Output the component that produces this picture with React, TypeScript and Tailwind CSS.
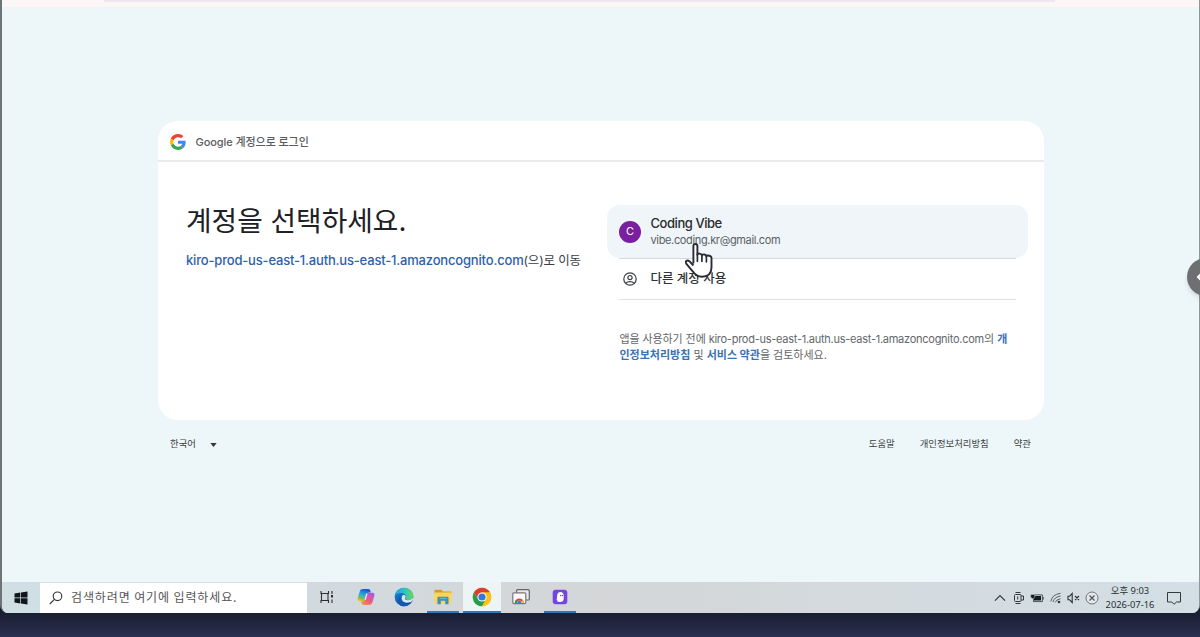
const footerLinks = ["도움말", "개인정보처리방침", "약관"];

function GoogleLogo() {
  return (
    <svg viewBox="0 0 48 48" className="h-4 w-4">
      <path fill="#EA4335" d="M24 9.5c3.54 0 6.71 1.22 9.21 3.6l6.85-6.85C35.9 2.38 30.47 0 24 0 14.62 0 6.51 5.38 2.56 13.22l7.98 6.19C12.43 13.72 17.74 9.5 24 9.5z" />
      <path fill="#4285F4" d="M46.98 24.55c0-1.57-.15-3.09-.38-4.55H24v9.02h12.94c-.58 2.96-2.26 5.48-4.78 7.18l7.73 6c4.51-4.18 7.09-10.36 7.09-17.65z" />
      <path fill="#FBBC05" d="M10.53 28.59c-.48-1.45-.76-2.99-.76-4.59s.27-3.14.76-4.59l-7.98-6.19C.92 16.46 0 20.12 0 24c0 3.88.92 7.54 2.56 10.78l7.97-6.19z" />
      <path fill="#34A853" d="M24 48c6.48 0 11.93-2.13 15.89-5.81l-7.73-6c-2.15 1.45-4.92 2.3-8.16 2.3-6.26 0-11.57-4.22-13.47-9.91l-7.98 6.19C6.51 42.62 14.62 48 24 48z" />
    </svg>
  );
}

function AccountIcon() {
  return (
    <svg viewBox="0 0 14 14" fill="none" stroke="#3c4043" strokeWidth="1.2" className="h-3.5 w-3.5">
      <circle cx="7" cy="7" r="6.2" />
      <circle cx="7" cy="5.6" r="2.1" />
      <path d="M2.8 11.2C5 9.1 9 9.1 11.2 11.2" />
    </svg>
  );
}

function HandCursor() {
  return (
    <svg viewBox="0 0 28 38" className="absolute top-[242px] left-[685px] h-[39px] w-7">
      <path
        d="M8.4 21V3.6c0-2.8 4-2.8 4 0v8.7c.5-1.8 4-1.6 4.5.5.6-1.5 4.1-1.1 4.5.9.9-1.2 5.1-.8 5.1 2.1v9.5c-.2 5.5-3 9-9.6 9-4.6 0-6.9-2-9-5.2L1.4 21.4c-1.7-2.9 1-4.3 3-2.7L8.4 23"
        fill="#fff"
        stroke="#2b2b36"
        strokeWidth="1.9"
        strokeLinejoin="round"
      />
      <path d="M12.4 11.5v7.2M16.9 12.8v6M21.4 13.7v5.6" stroke="#2b2b36" strokeWidth="1.7" strokeLinecap="round" />
    </svg>
  );
}

function SearchIcon() {
  return (
    <svg viewBox="0 0 14 14" fill="none" stroke="#333" strokeWidth="1.1" className="h-3.5 w-3.5">
      <circle cx="8.5" cy="5.3" r="4.3" />
      <path d="M5.4 8.4.8 13" />
    </svg>
  );
}

function TaskViewIcon() {
  return (
    <svg viewBox="0 0 14 14" fill="none" stroke="#2b3035" strokeWidth="1.1" className="h-3.5 w-3.5">
      <path d="M1 1v2.5h7.5V1M1 13v-2.5h7.5V13M1.5 3.5v7M8 3.5v7M12 1v3M12 9.5V13" />
      <path d="M11 5h2v2.6h-2z" fill="#2b3035" stroke="none" />
    </svg>
  );
}

function CopilotIcon() {
  return (
    <svg viewBox="0 0 18 18" className="h-[18px] w-[18px]">
      <defs>
        <linearGradient id="copilotCool" x1="0.6" y1="0" x2="0.2" y2="1">
          <stop offset="0" stopColor="#1757c8" />
          <stop offset="0.45" stopColor="#23a9df" />
          <stop offset="0.75" stopColor="#76bd65" />
          <stop offset="1" stopColor="#f5c720" />
        </linearGradient>
        <linearGradient id="copilotWarm" x1="0.8" y1="0" x2="0.2" y2="1">
          <stop offset="0" stopColor="#a55be8" />
          <stop offset="0.5" stopColor="#ec548b" />
          <stop offset="1" stopColor="#fa8b43" />
        </linearGradient>
      </defs>
      <path d="M5.8 1.1h5.5c1.2 0 1.8.8 2.1 1.8l.5 1.5h-1.6c-1.3 0-1.8.8-2.1 1.9L8.6 11c-.4 1.5-1 2.2-2.3 2.2H2.7C.7 13.2.1 11.8.7 10l2-6.6C3.2 1.9 4.2 1.1 5.8 1.1z" fill="url(#copilotCool)" />
      <path d="M12.2 16.9H6.7c-1.2 0-1.8-.8-2.1-1.8l-.5-1.5h1.6c1.3 0 1.8-.8 2.1-1.9L9.4 7c.4-1.5 1-2.2 2.3-2.2h3.6c2 0 2.6 1.4 2 3.2l-2 6.6c-.5 1.5-1.5 2.3-3.1 2.3z" fill="url(#copilotWarm)" />
      <path d="m9.2 5.4 1.3 0-1.7 6.3-1.3.4z" fill="#eef1fa" />
    </svg>
  );
}

function EdgeIcon() {
  return (
    <svg viewBox="0 0 20 20" className="h-5 w-5">
      <defs>
        <linearGradient id="edgeTop" x1="0" y1="0.5" x2="1" y2="0.5">
          <stop offset="0" stopColor="#249fdc" />
          <stop offset="0.5" stopColor="#2fc2c5" />
          <stop offset="1" stopColor="#6bd65b" />
        </linearGradient>
        <linearGradient id="edgeBody" x1="0" y1="0" x2="0.6" y2="1">
          <stop offset="0" stopColor="#1b8bd9" />
          <stop offset="1" stopColor="#0e4ca1" />
        </linearGradient>
      </defs>
      <circle cx="10" cy="10" r="9.3" fill="url(#edgeBody)" />
      <path d="M.8 9.2C1.4 4.3 5 .7 10 .7c5.5 0 9.3 3.8 9.3 7.9 0 3-2.4 4.6-4.8 4.6-2.2 0-3.3-.8-3.3-1.4 0-.5.8-.8.8-2.2 0-1.8-2-3.6-4.8-3.6C4.2 6 1.9 7.2.8 9.2z" fill="url(#edgeTop)" />
      <path d="M8.5 8.4c-1.9 2.6-.4 7.3 4.5 7.3 2.3 0 4.1-.8 5.3-1.7l1.4-3.4-2.5 1.7c-1.3.7-1.8.9-3 .9-2.2 0-3.3-.8-3.3-1.5 0-.5.8-.8.8-2.2-.5-1.6-2.3-2.5-3.2-1.1z" fill="#dbe7ec" />
      <path d="M6.7 9c-1.8 4.5 1.8 8.6 6.1 8.1 2.3-.2 4.2-1.3 5.2-3-.9 2.3-3.8 5.2-8 5.2-3.5 0-5.8-2.3-5.8-5.3 0-2.4 1.2-4.2 2.5-5z" fill="#1559ae" />
    </svg>
  );
}

function ExplorerIcon() {
  return (
    <svg viewBox="0 0 18 16" className="h-4 w-[18px]">
      <path d="M.5.8h7l1.2 1.7h8.8V5H.5z" fill="#d99b28" />
      <path d="M.5 3.5h17v11H.5z" fill="#fcd45d" />
      <path d="M3.5 15.3V8.8q0-1 1-1h9q1 0 1 1v6.5h-3.3v-3.6H6.8v3.6z" fill="#3d8fc0" />
      <path d="M5.5 9.4h7" stroke="#72b9dc" strokeWidth="1" />
    </svg>
  );
}

function ChromeIcon() {
  return (
    <svg viewBox="0 0 20 20" className="h-5 w-5">
      <circle cx="10" cy="10" r="9.3" fill="#fbc116" />
      <path d="M1.95 5.35A9.3 9.3 0 0 1 18.05 5.35H10L6 12.3z" fill="#dc3d31" />
      <path d="M1.95 5.35A9.3 9.3 0 0 0 10 19.3L14 12.3 6 12.3z" fill="#249d50" />
      <path d="M10 19.3 14 12.3V10L18.05 5.35A9.3 9.3 0 0 1 10 19.3z" fill="#fbc116" />
      <circle cx="10" cy="10" r="4.6" fill="#fff" />
      <circle cx="10" cy="10" r="3.6" fill="#3478df" />
    </svg>
  );
}

function RemoteIcon() {
  return (
    <svg viewBox="0 0 18 16" className="h-4 w-[18px]">
      <rect x="4.6" y=".7" width="12.7" height="10.3" rx="1" fill="#e9e9e9" stroke="#666" strokeWidth="1.2" />
      <rect x=".8" y="3.8" width="13" height="10.8" rx="1" fill="#fafafa" stroke="#777" strokeWidth="1.2" />
      <path d="M2.8 14a4.6 4.6 0 0 1 9.2 0H9.8a2.4 2.4 0 0 0-4.8 0z" fill="#db4435" />
      <path d="M2.8 14q0-1.8 1.1-3.1L5.6 12.3 5 14z" fill="#279a52" />
      <path d="M12 14q0-1.8-1.1-3.1L9.3 12.3l.5 1.7z" fill="#f8bd27" />
      <circle cx="7.4" cy="13.2" r="1.7" fill="#397cdc" />
    </svg>
  );
}

function KiroIcon() {
  return (
    <svg viewBox="0 0 16 16" className="h-4 w-4">
      <rect x=".7" y=".7" width="14.6" height="14.6" rx="3" fill="#7545df" />
      <path d="M5.2 6.3C5.4 3.8 6.9 2.9 8.4 2.9c2.1 0 3.3 1.5 3.3 3.8v2.8c0 2-1 3.4-2.6 3.2-.5.5-1.5.6-2 0-1.3.4-2-.3-1.6-1.3-.9-.2-1.1-1.2-.6-2z" fill="#fff" />
      <path d="M8.7 5.9v1.3M10.4 5.9v1.3" stroke="#332260" strokeWidth=".9" />
    </svg>
  );
}

const taskbarApps = [
  { name: "task-view", icon: <TaskViewIcon />, tile: "border-transparent" },
  { name: "copilot", icon: <CopilotIcon />, tile: "border-transparent" },
  { name: "edge", icon: <EdgeIcon />, tile: "border-transparent" },
  { name: "explorer", icon: <ExplorerIcon />, tile: "mx-[3px] border-[#2e78bd]" },
  { name: "chrome", icon: <ChromeIcon />, tile: "border-[#2e78bd] bg-[#edf4f6]" },
  { name: "remote", icon: <RemoteIcon />, tile: "border-transparent" },
  { name: "kiro", icon: <KiroIcon />, tile: "mx-[3px] border-[#2e78bd]" },
];

function TrayIcons() {
  return (
    <div className="flex items-center">
      <svg viewBox="0 0 12 8" fill="none" stroke="#333b40" strokeWidth="1.2" className="h-2 w-3">
        <path d="m1 6.7 5-5 5 5" />
      </svg>
      {/* camera */}
      <svg viewBox="0 0 12 14" fill="none" stroke="#333b40" className="ml-[7px] h-3.5 w-3">
        <rect x="1.5" y="3.5" width="6.5" height="7" rx="1" />
        <path d="M8 5h2.5v4H8M2.5 1.5h5M2.5 12.5h5M4.7 5.5v3" />
      </svg>
      {/* battery */}
      <svg viewBox="0 0 14 10" className="ml-[5px] h-2.5 w-3.5">
        <path d="M4 3h7v4.5H4z" fill="#111b21" />
        <path d="M3.5 1.9h8.9v6.700H3.500zM13.300 4v2.500" fill="none" stroke="#2c363b" strokeWidth=".8" />
        <path d="M.7 1.5h4v3l-2 1.3L.7 4.5z" fill="#111b21" stroke="#d0dce2" strokeWidth=".5" />
      </svg>
      {/* wifi */}
      <svg viewBox="0 0 12 12" fill="none" stroke="#4b555a" strokeWidth=".9" className="ml-1.5 h-3 w-3">
        <path d="M.8 9.5Q2 2.5 10.5 1.3M3 10Q4.2 5 10.5 4M5.2 10.5Q6.2 7.5 10.5 6.7" />
        <circle cx="9" cy="10" r="1.3" fill="#30383d" stroke="none" />
      </svg>
      <svg viewBox="0 0 13 12" fill="none" stroke="#2b3338" strokeWidth="1.1" className="ml-[5px] h-3 w-[13px]">
        <path d="M1 4.2h1.7L5.2 1.5v9L2.7 7.8H1zM8 4l4 4M12 4 8 8" />
      </svg>
      <svg viewBox="0 0 14 14" fill="none" stroke="#70777b" className="ml-[5px] h-3.5 w-3.5">
        <circle cx="7" cy="7" r="6" fill="#e4e8ea" />
        <path d="m4.5 4.5 5 5M9.5 4.5l-5 5" stroke="#50575b" strokeWidth="1.2" />
      </svg>
    </div>
  );
}

function Taskbar() {
  return (
    <div className="flex h-[31px] shrink-0 bg-linear-to-r from-[#d0dee5] via-[#d4d6d8] to-[#d3dfe5]">
      <div className="flex w-[38px] items-center justify-center bg-[#d0dfe4]">
        <svg viewBox="0 0 14 14" className="h-3.5 w-3.5">
          <path d="M.5 2.5 6.3 1.6v5H.5zM7 1.5 13.5.5v6.1H7zM.5 7.3h5.8v5.1l-5.8-.9zM7 7.3h6.5v6.2L7 12.5z" fill="#10171b" />
        </svg>
      </div>
      <div className="flex w-[267px] items-center border-t border-[#d8e0e2] bg-white pl-[9px] font-['Noto_Sans_CJK_KR',sans-serif] text-[12px] text-[#555]">
        <SearchIcon />
        <span className="-mt-[3px] ml-2 tracking-[0.88px] whitespace-nowrap">검색하려면 여기에 입력하세요.</span>
      </div>
      <div className="flex pl-[0.5px]">
        {taskbarApps.map((app) => (
          <div key={app.name} className="flex w-[38.8px] px-[0.5px]">
            <div className={`flex flex-1 items-center justify-center border-b-2 ${app.tile}`}>{app.icon}</div>
          </div>
        ))}
      </div>
      <div className="ml-auto flex items-center pr-[18px]">
        <TrayIcons />
        <div className="ml-[6px] w-[50px] text-center font-['Noto_Sans','Noto_Sans_CJK_KR',sans-serif] text-[9.4px] leading-[14px] text-[#273036]">
          <div>오후 9:03</div>
          <div className="whitespace-nowrap">2026-07-16</div>
        </div>
        <svg viewBox="0 0 14 14" fill="none" stroke="#30383d" className="ml-[12px] h-3.5 w-3.5">
          <path d="M.5 1.5h13v9.5h-4L7 13.3 4.8 11H.5z" />
        </svg>
      </div>
    </div>
  );
}

function SignInCard() {
  return (
    <div className="h-[299px] w-[886px] rounded-[20px] bg-white">
      <div className="flex h-[41px] items-center border-b-2 border-[#e8eaeb] pt-[3px] pl-[12px]">
        <GoogleLogo />
        <span className="mt-px ml-[9.5px] text-[11px] font-medium tracking-[-0.07px] text-[#5a5d60]">Google 계정으로 로그인</span>
      </div>

      <div className="flex">
        <div className="w-[449px] pt-[38px] pl-[28px]">
          <h1 className="text-[27.8px] leading-[42px] whitespace-nowrap text-[#202124]">계정을 선택하세요.</h1>
          <p className="mt-[8px] text-[12.5px] leading-5 tracking-[-0.2px] whitespace-nowrap text-[#3c4043]">
            <a className="text-[13px] font-medium tracking-[-0.18px] text-[#2c62ab]">kiro-prod-us-east-1.auth.us-east-1.amazoncognito.com</a>
            (으)로 이동
          </p>
        </div>

        <div className="w-[421px] pt-[43px]">
          <div className="flex h-[53px] items-center rounded-[13px] bg-[#eff5f8] px-3">
            <div className="flex h-[22px] w-[22px] items-center justify-center rounded-full bg-[#7a1fa0] text-[11px] text-white">C</div>
            <div className="ml-[9.5px] leading-[17px]">
              <div className="text-[13px] font-medium tracking-[-0.45px] text-[#2a2c2e]">Coding Vibe</div>
              <div className="text-[11px] tracking-[-0.35px] text-[#5b6064]">vibe.coding.kr@gmail.com</div>
            </div>
          </div>
          <div className="mx-3 flex h-[42px] items-center border-t border-b border-t-[#d5d9dc] border-b-[#dfe1e3] pl-1">
            <AccountIcon />
            <span className="ml-[13.5px] text-[12.5px] font-medium text-[#303336]">다른 계정 사용</span>
          </div>
          <p className="mt-[32px] ml-[12.5px] text-[11px] leading-[15.5px] whitespace-nowrap text-[#63676a]">
            <span className="tracking-[-0.1px]">앱을 사용하기 전에 </span>
            <span className="tracking-[-0.26px]">kiro-prod-us-east-1.auth.us-east-1.amazoncognito.com</span>의{" "}
            <a className="font-bold text-[#3b72b5]">개<br />인정보처리방침</a> 및{" "}
            <a className="font-bold text-[#3b72b5]">서비스 약관</a>을 검토하세요.
          </p>
        </div>
      </div>
    </div>
  );
}

export default function App() {
  return (
    <div className="relative h-[637px] w-[1200px] overflow-hidden bg-linear-to-b from-[#181d30] from-96% to-[#2a3051] font-['Inter','Noto_Sans_CJK_KR',sans-serif]">
      <div className="flex h-[613px] flex-col overflow-hidden rounded-b-[8px] border-r border-l-2 border-r-[#8f979a] border-l-[#6f7476] bg-[#edf6f8]">
        <div className="h-[8px] shrink-0 border-b border-[#f4f1f4] bg-[#fdf6f7] pl-[102px]">
          <div className="h-[2px] w-[951px] bg-[#eee6ec]" />
        </div>

        <div className="flex flex-1 flex-col pt-[113px] pl-[156px]">
          <SignInCard />
          <div className="mt-[15px] flex h-[18px] w-[886px] items-center pr-[13px] pl-[12px] text-[9.4px] text-[#3d4245]">
            <span>한국어</span>
            <svg viewBox="0 0 8 5" className="mt-px ml-[14px] h-[4px] w-[7px]">
              <path d="M0 0h8L4 5z" fill="#33383b" />
            </svg>
            <div className="ml-auto flex gap-[25px]">
              {footerLinks.map((label) => (
                <a key={label}>{label}</a>
              ))}
            </div>
          </div>
        </div>

        <Taskbar />
      </div>

      <HandCursor />

      {/* Side panel handle */}
      <div className="absolute top-[258px] left-[1187px] flex h-[38px] w-[38px] items-center rounded-full bg-[#6d6f70] pl-[9px] shadow-md">
        <svg viewBox="0 0 8 10" fill="none" stroke="#fff" strokeWidth="2" className="h-2.5 w-2">
          <path d="M6 1 2 5l4 4" />
        </svg>
      </div>
    </div>
  );
}
